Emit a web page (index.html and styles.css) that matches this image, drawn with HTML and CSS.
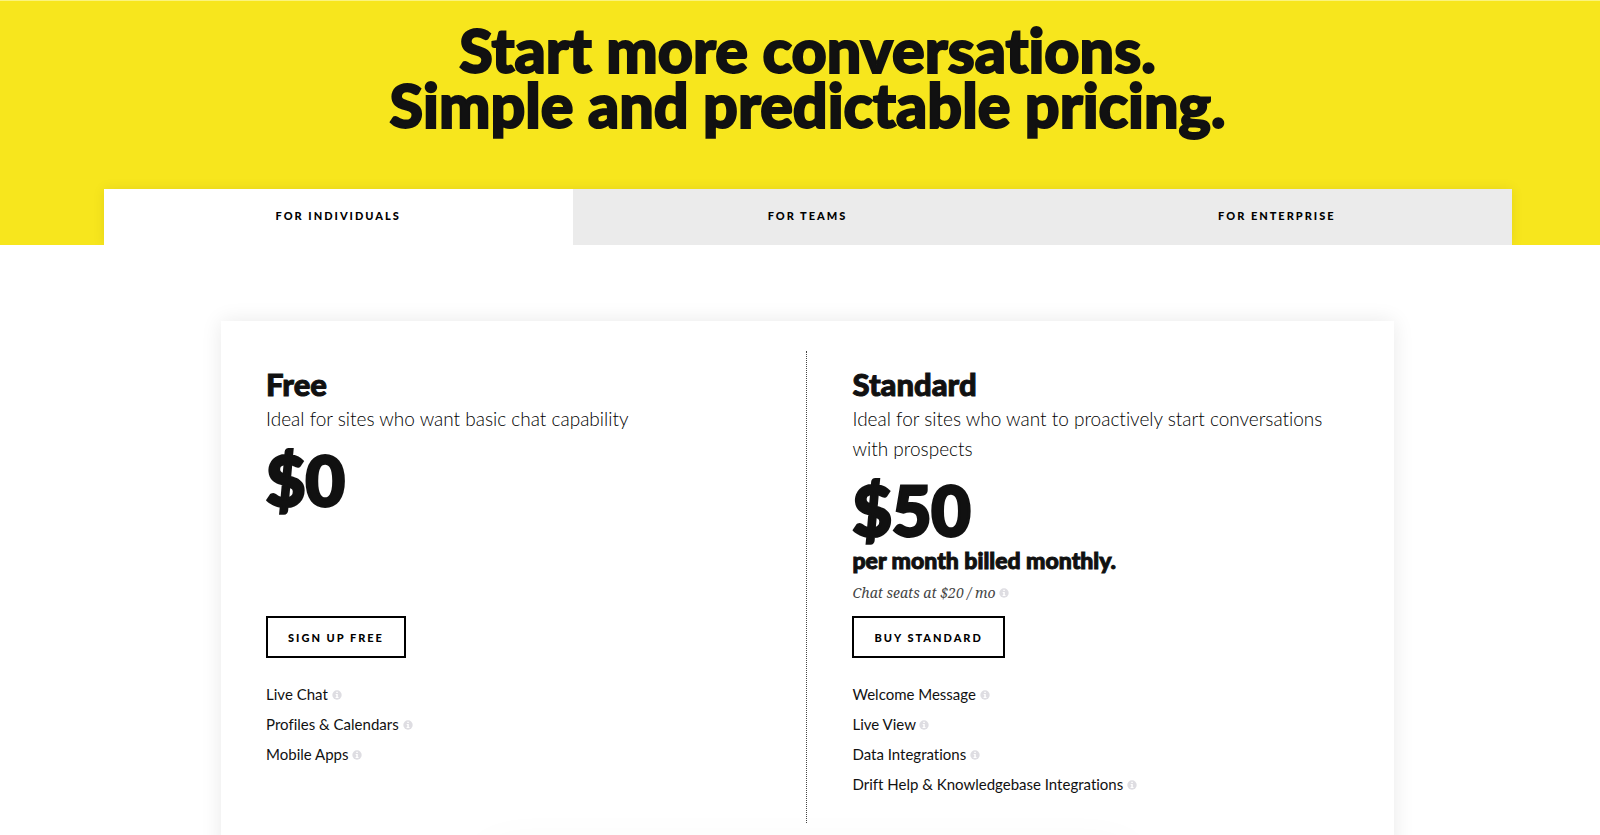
FILE: index.html
```html
<!DOCTYPE html>
<html lang="en">
<head>
<meta charset="utf-8">
<meta name="viewport" content="width=device-width, initial-scale=1">
<title>Pricing</title>
<link rel="stylesheet" href="styles.css">
</head>
<body>
<svg class="sprite" aria-hidden="true">
  <symbol id="info" viewBox="0 0 10 10">
    <circle cx="5" cy="5" r="4.7" fill="#dedde2"/>
    <path d="M4.3 1.8h1.5v1.3H4.3zM3.7 4h2.1v3.1h.7v1H3.6v-1h.7V5h-.6z" fill="#fff"/>
  </symbol>
</svg>
<header class="hero">
  <h1 class="hero-title">Start more conversations.<br>Simple and predictable pricing.</h1>
  <nav class="tabs" aria-label="Plan types">
    <button class="tab tab-active" type="button">For individuals</button>
    <button class="tab" type="button">For teams</button>
    <button class="tab" type="button">For enterprise</button>
  </nav>
</header>
<main class="content">
  <div class="card">
    <section class="plan plan-divided">
      <div class="plan-head">
        <h2 class="plan-name">Free</h2>
        <p class="plan-text">Ideal for sites who want basic chat capability</p>
        <p class="price">$0</p>
      </div>
      <button class="cta" type="button">Sign up free</button>
      <ul class="features">
        <li class="feature">Live Chat <svg class="info"><use href="#info"/></svg></li>
        <li class="feature">Profiles &amp; Calendars <svg class="info"><use href="#info"/></svg></li>
        <li class="feature">Mobile Apps <svg class="info"><use href="#info"/></svg></li>
      </ul>
    </section>
    <section class="plan">
      <div class="plan-head">
        <h2 class="plan-name">Standard</h2>
        <p class="plan-text">Ideal for sites who want to proactively start conversations with prospects</p>
        <p class="price">$50</p>
        <p class="billing">per month billed monthly.</p>
        <p class="seats">Chat seats at $20 / mo <svg class="info"><use href="#info"/></svg></p>
      </div>
      <button class="cta" type="button">Buy standard</button>
      <ul class="features">
        <li class="feature">Welcome Message <svg class="info"><use href="#info"/></svg></li>
        <li class="feature">Live View <svg class="info"><use href="#info"/></svg></li>
        <li class="feature">Data Integrations <svg class="info"><use href="#info"/></svg></li>
        <li class="feature">Drift Help &amp; Knowledgebase Integrations <svg class="info"><use href="#info"/></svg></li>
      </ul>
    </section>
  </div>
  <div class="panel"></div>
</main>
</body>
</html>
```
FILE: styles.css
```css
* { box-sizing: border-box; }
body {
  margin: 0;
  background: #fff;
  color: #111;
  font-family: Lato, "Open Sans", sans-serif;
  font-variant-ligatures: none;
}
h1, h2, p, ul { margin: 0; padding: 0; }
button { font-family: inherit; color: #000; cursor: pointer; }
.sprite { display: none; }

.hero {
  background: #f7e61d;
  border-top: 1px solid #fbf47c;
  padding: 21px 0 0 15px;
}
.hero-title {
  font-size: 61px;
  line-height: 55px;
  font-weight: 900;
  text-align: center;
  -webkit-text-stroke: 2px #111;
}
.tabs {
  display: grid;
  grid-template-columns: repeat(3, 1fr);
  width: 89%;
  max-width: 1408px;
  margin: 57px auto 0;
  box-shadow: 0 0 12px rgba(0, 0, 0, 0.08);
  clip-path: inset(-12px -12px 0 -12px);
}
.tab {
  height: 56px;
  padding: 0 0 4px;
  border: 0;
  background: #ebebeb;
  font-size: 11px;
  font-weight: 900;
  letter-spacing: 2px;
  text-transform: uppercase;
}
.tab-active { background: #fff; }

.content { padding: 76px 0 0 15px; }
.card {
  display: grid;
  grid-template-columns: repeat(2, 1fr);
  grid-template-rows: auto auto 1fr;
  width: 74%;
  max-width: 1173px;
  margin: 0 auto;
  padding: 30px 0;
  background: #fff;
  box-shadow: 0 0 20px rgba(0, 0, 0, 0.09);
}
.plan {
  display: grid;
  grid-row: span 3;
  grid-template-rows: subgrid;
  justify-items: start;
  padding: 13px 45px 24px;
}
.plan-divided { border-right: 1px dotted #444; }
.plan-name {
  font-size: 31px;
  line-height: 40px;
  font-weight: 900;
  -webkit-text-stroke: 1px #111;
}
.plan-text { font-size: 19px; line-height: 30px; font-weight: 300; color: #000; }
.price {
  margin-top: 14px;
  font-size: 68px;
  line-height: 64px;
  font-weight: 900;
  -webkit-text-stroke: 3px #111;
}
.billing {
  font-size: 23px;
  line-height: 36px;
  font-weight: 900;
  -webkit-text-stroke: 1px #111;
}
.seats {
  padding-bottom: 8px;
  font-family: "Noto Serif", "Liberation Serif", serif;
  font-size: 14px;
  line-height: 30px;
  font-style: italic;
  color: #444;
}
.cta {
  height: 42px;
  padding: 0 20px;
  border: 2px solid #000;
  background: #fff;
  font-size: 11px;
  font-weight: 900;
  letter-spacing: 2px;
  text-transform: uppercase;
}
.features { padding-top: 21px; list-style: none; }
.feature { font-size: 15px; line-height: 30px; }
.info { width: 10px; height: 10px; }
.panel {
  position: relative;
  width: 640px;
  max-width: 100%;
  height: 40px;
  margin: 0 auto;
  background: #fff;
  box-shadow: 0 0 50px rgba(0, 0, 0, 0.05);
}
```
